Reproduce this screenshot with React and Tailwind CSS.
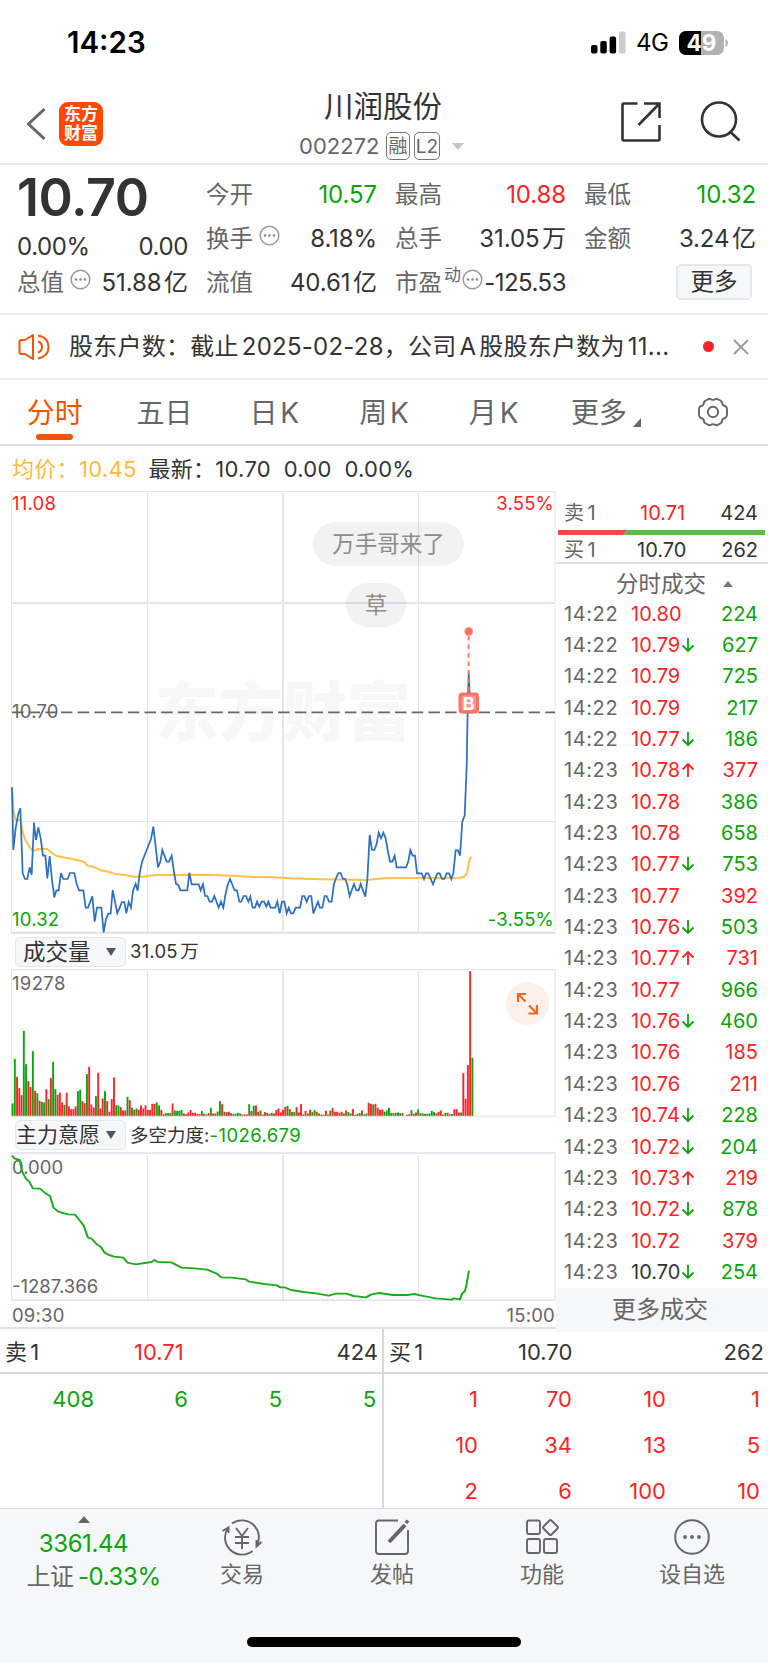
import { clsx } from 'clsx';

const RED = 'text-[#f92427]';
const GREEN = 'text-[#0ca30c]';
const DARK = 'text-[#333333]';

const TABS = ['分时', '五日', '日 K', '周 K', '月 K'];

// time, price, direction, volume, volume side
const TRADES = [
  ['14:22', '10.80', '', 224, 's'],
  ['14:22', '10.79', 'down', 627, 's'],
  ['14:22', '10.79', '', 725, 's'],
  ['14:22', '10.79', '', 217, 's'],
  ['14:22', '10.77', 'down', 186, 's'],
  ['14:23', '10.78', 'up', 377, 'b'],
  ['14:23', '10.78', '', 386, 's'],
  ['14:23', '10.78', '', 658, 's'],
  ['14:23', '10.77', 'down', 753, 's'],
  ['14:23', '10.77', '', 392, 'b'],
  ['14:23', '10.76', 'down', 503, 's'],
  ['14:23', '10.77', 'up', 731, 'b'],
  ['14:23', '10.77', '', 966, 's'],
  ['14:23', '10.76', 'down', 460, 's'],
  ['14:23', '10.76', '', 185, 'b'],
  ['14:23', '10.76', '', 211, 'b'],
  ['14:23', '10.74', 'down', 228, 's'],
  ['14:23', '10.72', 'down', 204, 's'],
  ['14:23', '10.73', 'up', 219, 'b'],
  ['14:23', '10.72', 'down', 878, 's'],
  ['14:23', '10.72', '', 379, 'b'],
  ['14:23', '10.70', 'down', 254, 's'],
];

const SELL_QUEUE = [408, 6, 5, 5];
const BUY_QUEUE = [1, 70, 10, 1, 10, 34, 13, 5, 2, 6, 100, 10];

const PRICE_LINE =
  '36,262 40,450 47,385 54,345 61,325 68,520 75,537 82,537 89,502 95,524 102,368 108,420 115,382 122,415 129,467 136,467 142,535 149,468 156,540 163,592 169,571 176,571 183,519 190,537 203,537 210,519 223,519 230,552 237,571 250,571 257,623 264,623 277,589 284,665 291,623 304,623 311,697 318,657 325,641 332,641 338,570 345,605 352,640 359,623 366,606 373,606 379,640 386,606 393,623 399,572 407,552 413,572 419,520 426,486 440,450 453,417 460,380 467,440 474,502 481,485 487,450 500,485 507,485 515,467 521,510 528,552 535,555 541,571 562,571 568,518 575,553 596,553 602,571 609,553 615,588 622,588 629,605 636,605 643,588 656,623 663,605 670,623 677,580 683,555 690,537 704,571 711,571 718,605 724,605 731,588 738,588 745,605 751,590 758,623 765,623 771,605 778,620 785,605 792,605 799,620 805,605 812,623 826,623 832,605 839,640 846,605 853,605 860,640 866,623 873,640 880,640 887,623 900,623 907,588 913,588 920,605 927,588 934,588 940,640 954,605 960,623 967,623 974,588 980,588 987,605 995,605 1002,552 1008,535 1015,519 1022,519 1029,537 1036,537 1042,555 1049,588 1062,552 1069,571 1076,571 1082,552 1089,571 1096,590 1102,540 1109,405 1116,450 1123,450 1130,432 1136,398 1143,415 1150,398 1157,415 1163,450 1170,485 1177,485 1184,467 1190,502 1218,502 1225,484 1231,450 1238,467 1245,467 1251,520 1265,520 1272,537 1278,520 1285,520 1299,553 1312,520 1319,520 1326,537 1333,537 1340,520 1347,520 1354,537 1360,519 1367,451 1374,451 1380,467 1387,365 1394,347 1400,200 1403,30 1406,-82 1410,0';

const AVG_LINE =
  '36,262 40,330 47,360 61,360 68,395 75,418 88,440 98,453 115,447 142,447 155,458 170,468 205,475 240,482 252,486 264,498 280,500 300,510 330,517 345,522 375,525 400,530 430,530 465,525 620,524 700,527 760,531 820,532 870,535 960,538 1100,540 1150,535 1240,534 1380,533 1392,530 1400,522 1404,505 1407,485 1413,470';

const FORCE_LINE =
  '34,47 40,55 55,60 62,95 72,115 82,125 92,145 112,146 125,158 140,168 150,203 163,215 190,223 210,224 222,240 234,256 246,292 258,297 270,312 282,320 292,337 305,345 320,350 345,353 357,368 380,373 425,366 433,360 442,366 480,367 508,383 545,385 580,389 605,400 620,412 650,413 688,418 698,425 740,432 775,436 785,442 797,442 815,450 850,456 885,460 920,467 940,461 970,461 990,468 1025,472 1040,463 1062,459 1100,465 1140,465 1160,462 1180,467 1220,475 1265,479 1270,475 1288,478 1294,461 1302,453 1306,435 1313,392';

// one entry per minute: side + height
const VOLUMES =
  'g37 g171 r117 r83 r62 g255 g155 r104 r86 g194 r75 g68 r45 g42 g40 r80 g50 r113 g162 g80 r63 r70 r40 g33 r69 r28 r20 r20 r28 g74 g78 r44 r38 g125 r147 r34 r25 g59 r129 r22 r52 g74 r44 r12 r50 r115 g32 g31 r26 r16 r16 g57 r47 g24 r18 g22 r18 r31 r22 r31 r18 r18 r36 r36 g40 g31 r18 r5 g8 g8 g8 r37 g16 g15 g15 g18 r7 r5 r10 r17 r9 r9 r6 r5 g14 r6 g4 r8 g24 r7 r7 g13 g44 r35 g12 r11 r12 r8 g6 g6 g9 g7 r4 r4 r4 g35 r15 g30 r31 r12 g16 r4 r11 g9 r6 g9 r7 r17 r22 r10 r18 r27 g30 r20 g11 g12 r26 r10 r35 r4 r15 g7 r18 g11 g17 r12 g7 r4 g3 r15 r4 g16 r23 r12 r12 r9 r12 g7 r16 g11 g7 r20 g3 r6 g8 r16 g4 g7 r39 r36 g34 r36 r24 r18 r19 g12 g16 g24 g9 r8 g9 g10 g8 r8 r0 r3 r5 g17 r6 r10 g19 g8 r7 g6 g6 g7 g15 g11 r7 r12 r16 g4 g9 r9 g5 g5 r20 r20 r10 g10 r128 r51 r152 r434 g174'.split(' ');

function StatusBar() {
  return (
    <div className="flex h-[85px] items-center justify-between pl-[67px] pr-[39px]">
      <span className="text-[29.5px] font-semibold leading-none text-black">14:23</span>
      <div className="flex items-center">
        <svg width="35" height="23" viewBox="0 0 35 23">
          <rect x="0" y="14" width="6.5" height="8.5" rx="2" />
          <rect x="9.3" y="10" width="6.5" height="12.5" rx="2" />
          <rect x="18.6" y="5.5" width="6.5" height="17" rx="2" />
          <rect x="28" y="0.5" width="6.5" height="22" rx="2" fill="#cccccc" />
        </svg>
        <span className="ml-2.5 w-[33px] text-2xl leading-none tracking-[-0.5px] text-black">4G</span>
        <svg className="ml-2.5" width="50" height="26" viewBox="0 0 50 26">
          <rect x="0" y="1" width="45" height="24" rx="7" fill="#b2b2b2" />
          <path d="M7 1H22V25H7A7 7 0 0 1 0 18V8A7 7 0 0 1 7 1Z" />
          <path d="M46.5 9Q49 10 49 13T46.5 17Z" fill="#b2b2b2" />
          <text x="22.5" y="21" textAnchor="middle" fontSize="22.5" fontWeight="700" fill="#fff">49</text>
        </svg>
      </div>
    </div>
  );
}

function Header() {
  return (
    <header className="flex h-20 border-b-2 border-[#ececee] pl-[26px] pr-[26px]">
      <div className="flex w-[273px] items-center pb-3 pt-[11px]">
        <svg width="20" height="34" viewBox="0 0 20 34" fill="none" stroke="#666" strokeWidth="3">
          <path d="M18.5 2L2.5 17L18.5 32" />
        </svg>
        <div className="ml-[13px] flex h-11 w-11 flex-col items-center justify-center rounded-[9px] bg-[#ff4800] text-[17px] font-bold leading-[19px] text-white">
          <span>东方</span>
          <span>财富</span>
        </div>
      </div>
      <div className="flex flex-1 flex-col pt-[3px]">
        <h1 className="pl-[25px] text-[29.5px] leading-[37px] text-[#333333]">川润股份</h1>
        <div className="mt-[7px] flex h-7 items-center text-[#666666]">
          <span className="w-[87px] text-[22px]">002272</span>
          <span className="flex h-7 w-6 items-center justify-center rounded-[5px] border border-[#777777] text-[19px] leading-none">融</span>
          <span className="ml-1 flex h-7 w-[26px] items-center justify-center rounded-[5px] border border-[#777777] text-[19px] leading-none">L2</span>
          <span className="ml-3 h-0 w-0 border-x-[6px] border-t-[7px] border-x-transparent border-t-[#c4c4c4]" />
        </div>
      </div>
      <svg className="mt-4 mr-[38px]" width="42" height="42" viewBox="0 0 42 42" fill="none" stroke="#333" strokeWidth="2.6">
        <path d="M17.5 2.5H4Q2.5 2.5 2.5 4V38Q2.5 39.5 4 39.5H38Q39.5 39.5 39.5 38V24" />
        <path d="M24 2.5H39.5V17M39 3L18.5 24" />
      </svg>
      <svg className="mt-4" width="42" height="42" viewBox="0 0 42 42" fill="none" stroke="#333" strokeWidth="2.6">
        <circle cx="19" cy="18.5" r="17" />
        <path d="M30.5 31L39.5 39.5" />
      </svg>
    </header>
  );
}

function Dots() {
  return (
    <svg className="-mt-2 shrink-0" width="21" height="21" viewBox="0 0 21 21">
      <circle cx="10.5" cy="10.5" r="9.3" fill="none" stroke="#999" strokeWidth="1.5" />
      <circle cx="6" cy="10.5" r="1.3" fill="#888" />
      <circle cx="10.5" cy="10.5" r="1.3" fill="#888" />
      <circle cx="15" cy="10.5" r="1.3" fill="#888" />
    </svg>
  );
}

function Stat({ label, value, color = DARK, sup, dots }) {
  return (
    <div className="flex h-11 items-center justify-between whitespace-nowrap">
      <span className="flex items-center text-[23.5px] text-[#666666]">
        {label}
        {sup && <sup className="-top-2 ml-0.5 text-[17px] leading-none">{sup}</sup>}
        {dots && <span className={clsx('flex', sup ? 'ml-px' : 'ml-1.5')}><Dots /></span>}
      </span>
      <span className={clsx('text-[24px] [word-spacing:-4px]', sup ? 'tracking-[-0.5px]' : 'tracking-[-0.1px]', color)}>{value}</span>
    </div>
  );
}

function Quote() {
  return (
    <section className="flex h-[150px] gap-[18px] border-b-2 border-[#ececee] pl-[17px] pr-[12px] pt-2">
      <div className="w-[171px]">
        <div className="h-[52px] text-[52px] font-semibold leading-[49px] tracking-[-0.4px] text-[#333333]">10.70</div>
        <div className="flex h-9 items-center justify-between pt-[7px] text-[24px] tracking-[-0.4px] text-[#333333]">
          <span>0.00%</span>
          <span>0.00</span>
        </div>
        <Stat label="总值" value="51.88 亿" dots />
      </div>
      <div className="w-[171px]">
        <Stat label="今开" value="10.57" color={GREEN} />
        <Stat label="换手" value="8.18%" dots />
        <Stat label="流值" value="40.61 亿" />
      </div>
      <div className="w-[171px]">
        <Stat label="最高" value="10.88" color={RED} />
        <Stat label="总手" value="31.05 万" />
        <Stat label="市盈" sup="动" value="-125.53" dots />
      </div>
      <div className="w-[172px]">
        <Stat label="最低" value="10.32" color={GREEN} />
        <Stat label="金额" value="3.24 亿" />
        <button className="ml-auto mr-1 mt-[3px] flex h-9 w-[76px] items-center justify-center rounded-[5px] border-2 border-[#e4e7ec] bg-[#f6f7f9] text-[23.5px] text-[#333333]">更多</button>
      </div>
    </section>
  );
}

function Notice() {
  return (
    <div className="flex h-[65px] items-center border-b-2 border-[#ececee] pl-[18px]">
      <svg width="32" height="28" viewBox="0 0 32 28" fill="none" stroke="#f0560a" strokeWidth="2">
        <path d="M15 2L7 7H3.5Q1.5 7 1.5 9V19Q1.5 21 3.5 21H7L15 26Z" strokeLinejoin="round" />
        <path d="M20 8.5Q24 10 24 14T20 19.5M20 2.5Q30.5 4.5 30.5 14T20 25.5" />
      </svg>
      <p className="ml-[19px] w-[634px] whitespace-nowrap text-[24px] tracking-[0.25px] text-[#333333] [word-spacing:-4px]">股东户数：截止 2025-02-28，公司 A 股股东户数为 11...</p>
      <span className="h-[11px] w-[11px] rounded-full bg-[#f92427]" />
      <svg className="ml-[19px]" width="16" height="16" viewBox="0 0 16 16" stroke="#999" strokeWidth="1.8">
        <path d="M1 1L15 15M15 1L1 15" />
      </svg>
    </div>
  );
}

function Tabs() {
  return (
    <nav className="grid h-[66px] grid-cols-7 border-b-2 border-[#dfe1e8] text-[28px] text-[#666666]">
      {TABS.map((tab, i) => (
        <div key={tab} className={clsx('relative flex items-center justify-center whitespace-nowrap pt-px [word-spacing:-5px]', i === 0 && 'text-[#ee5500]')}>
          {tab}
          {i === 0 && <span className="absolute bottom-1 h-[6px] w-[37px] rounded-[3px] bg-[#ee5500]" />}
        </div>
      ))}
      <div className="flex items-center justify-center whitespace-nowrap pl-[5px] pt-px">
        更多
        <span className="ml-1.5 mt-[20px] h-0 w-0 border-b-[9px] border-l-[8px] border-b-[#666666] border-l-transparent" />
      </div>
      <div className="flex items-center justify-center">
        <svg width="32" height="30" viewBox="0 0 32 30" fill="none" stroke="#666" strokeWidth="1.9">
          <path d="M10.5 2.5Q12.5 1 14 2.2Q16 3.6 18 2.2Q19.5 1 21.5 2.5L24 4Q25 5 25.3 6.5Q25.5 8.5 28 9Q30 9.800 30 12V18Q30 20.2 28 21Q25.5 21.5 25.3 23.5Q25 25 24 26L21.5 27.5Q19.5 29 18 27.8Q16 26.4 14 27.8Q12.5 29 10.5 27.5L8 26Q7 25 6.7 23.5Q6.5 21.5 4 21Q2 20.2 2 18V12Q2 9.8 4 9Q6.5 8.5 6.7 6.5Q7 5 8 4Z" strokeLinejoin="round" />
          <circle cx="16" cy="15" r="5.2" />
        </svg>
      </div>
    </nav>
  );
}

function Bubble({ x, y, width, children }) {
  return (
    <g>
      <rect x={x} y={y} width={width} height="44" rx="22" fill="#000" fillOpacity="0.05" />
      <text x={x + width / 2} y={y + 30} textAnchor="middle" fontSize="22.5" fill="#8c8c8c">{children}</text>
    </g>
  );
}

function PriceChart() {
  return (
    <svg className="block" width="545" height="443" viewBox="11 491 545 443">
      <text x="283" y="735" textAnchor="middle" fontSize="64" fontWeight="900" fill="#f7f7f8">东方财富</text>
      <g stroke="#e4e5ef" fill="none">
        <path d="M11 491.5H556M11.5 491V934M555 491V934" stroke="#e6e8eb" />
        <path d="M11 603H555M283 493V931" strokeWidth="2" />
        <path d="M11 821.5H555M147.5 493V931M418.5 493V931" strokeWidth="1.2" />
        <path d="M11 932.8H555" stroke="#dfe1e8" strokeWidth="2" />
      </g>
      <path d="M61 712.3H555M12 712.3H58" stroke="#666" strokeWidth="1.7" strokeDasharray="11.5 5.2" />
      <g transform="translate(0 700) scale(0.33333)" fill="none">
        <polyline points={AVG_LINE} stroke="#ffc04d" strokeWidth="6" />
        <polyline points={PRICE_LINE} stroke="#2d70bd" strokeWidth="5.2" />
      </g>
      <path d="M468.7 636V692" stroke="#ff7364" strokeWidth="1.8" strokeDasharray="4.5 4" />
      <circle cx="468.7" cy="631.5" r="4.2" fill="#ff7364" />
      <rect x="458.5" y="692.5" width="20.5" height="21" rx="4" fill="#ff7364" />
      <rect x="461.5" y="695.5" width="14.5" height="15" rx="2" fill="#ff9488" />
      <text x="468.7" y="709.5" textAnchor="middle" fontSize="18" fontWeight="700" fill="#fff">B</text>
      <Bubble x={313} y={522} width={151}>万手哥来了</Bubble>
      <Bubble x={346} y={583} width={60}>草</Bubble>
      <g fontSize="18.5" letterSpacing="0.2">
        <text x="12" y="510" fill="#f92427">11.08</text>
        <text x="554" y="510" textAnchor="end" fill="#f92427">3.55%</text>
        <text x="12" y="718" fill="#666">10.70</text>
        <text x="12" y="926" fill="#0ca30c">10.32</text>
        <text x="554" y="926" textAnchor="end" fill="#0ca30c">-3.55%</text>
      </g>
    </svg>
  );
}

function VolumeChart() {
  return (
    <svg className="block" width="545" height="148" viewBox="11 969 545 148">
      <g stroke="#e4e5ef" fill="none">
        <path d="M11 969.5H555M11 1116.3H555M11.5 969V1117M555 969V1117" stroke="#e3e6ea" strokeWidth="1.3" />
        <path d="M283 971V1116" strokeWidth="2" />
        <path d="M147.5 971V1116M418.5 971V1116" strokeWidth="1.2" />
      </g>
      {VOLUMES.map((bar, i) => {
        const h = Number(bar.slice(1)) / 3;
        return <rect key={i} x={11.6 + i * 2.254} y={1115.8 - h} width="1.9" height={h} fill={bar[0] === 'g' ? '#0ca30c' : '#f92427'} />;
      })}
      <text x="12" y="990" fontSize="18.5" letterSpacing="0.35" fill="#666">19278</text>
      <circle cx="527.5" cy="1003.5" r="21.5" fill="#fdf0ea" />
      <path d="M518 1002V994H526M518 994L525.5 1001.5M537 1005V1013.5H528.5M537 1013.5L529 1005.5" fill="none" stroke="#f0661a" strokeWidth="2.2" />
    </svg>
  );
}

function ForceChart() {
  return (
    <svg className="block" width="545" height="149" viewBox="11 1152 545 149">
      <g stroke="#e4e5ef" fill="none">
        <path d="M11 1153H555M11 1300.3H555" stroke="#dfe1e8" strokeWidth="1.7" />
        <path d="M11.5 1152V1301M555 1152V1301M147.5 1155V1300M418.5 1155V1300" strokeWidth="1.2" />
        <path d="M283 1155V1300" strokeWidth="2" />
      </g>
      <text x="12" y="1173.5" fontSize="18.5" fill="#666">0.000</text>
      <text x="12" y="1292.5" fontSize="18.5" fill="#666">-1287.366</text>
      <g transform="translate(0 1140) scale(0.35714 0.33333)">
        <polyline points={FORCE_LINE} fill="none" stroke="#1cab1c" strokeWidth="5.6" strokeLinejoin="round" />
      </g>
    </svg>
  );
}

function Picker({ children }) {
  return (
    <span className="flex h-[30px] w-[111px] items-center justify-between whitespace-nowrap rounded-[5px] border-[1.5px] border-[#e4e7ec] bg-[#f6f7f9] pr-[9px] text-[#333333]">
      {children}
      <span className="h-0 w-0 border-x-[5px] border-t-[8px] border-x-transparent border-t-[#555555]" />
    </span>
  );
}

function Charts() {
  return (
    <div className="w-[556px]">
      <div className="pl-[11px]">
        <PriceChart />
        <div className="flex h-[35px] items-center pl-1">
          <Picker><span className="pl-[7px] text-[22.5px]">成交量</span></Picker>
          <span className="ml-1 text-[18.5px] tracking-[0.2px] text-[#333333] [word-spacing:-3px]">31.05 万</span>
        </div>
        <VolumeChart />
        <div className="flex h-[35px] items-center pl-1">
          <Picker><span className="text-[21px]">主力意愿</span></Picker>
          <span className="ml-1 mt-0.5 text-[18.5px] text-[#333333]">多空力度: <span className={clsx('-ml-[5px] tracking-[0.4px]', GREEN)}>-1026.679</span></span>
        </div>
        <ForceChart />
      </div>
      <div className="flex h-[28px] items-center justify-between border-b-2 border-[#dfe1e8] pl-3 pr-px pt-1 text-[18.5px] tracking-[0.2px] text-[#666666]">
        <span>09:30</span>
        <span>15:00</span>
      </div>
    </div>
  );
}

function Arrow({ dir }) {
  return (
    <svg className="-ml-[2px]" width="14" height="16" viewBox="0 0 14 16" fill="none" strokeWidth="1.8" stroke={dir === 'up' ? '#f92427' : '#0ca30c'}>
      <path d={dir === 'up' ? 'M7 15V2M1.5 7.5L7 2L12.5 7.5' : 'M7 1V14M1.5 8.5L7 14L12.5 8.5'} />
    </svg>
  );
}

function Trades() {
  return (
    <div className="flex flex-1 flex-col text-[20px]">
      <div className="flex h-[39px] items-center pl-2 pr-[10px] pt-1">
        <span className="w-[76px] text-[#666666] [word-spacing:-2px]">卖 1</span>
        <span className={clsx('flex-1', RED)}>10.71</span>
        <span className={DARK}>424</span>
      </div>
      <svg className="ml-0.5 block" width="207" height="5" viewBox="0 0 207 5">
        <path d="M0 0H70L65 5H0Z" fill="#ee4a4a" />
        <path d="M70 0H207V5H65Z" fill="#5bbb46" />
      </svg>
      <div className="flex h-[29px] items-center border-b-2 border-[#dfe1e8] pl-2 pr-[10px] pt-[3px]">
        <span className="w-[73px] text-[#666666] [word-spacing:-2px]">买 1</span>
        <span className={clsx('flex-1', DARK)}>10.70</span>
        <span className={DARK}>262</span>
      </div>
      <div className="flex h-[34px] items-center pl-[60px] pt-1.5 text-[22.5px] text-[#666666]">
        分时成交
        <span className="ml-[17px] h-0 w-0 border-x-[5px] border-b-[6px] border-x-transparent border-b-[#777777]" />
      </div>
      <div>
        {TRADES.map(([time, price, dir, volume, side], i) => (
          <div key={i} className="flex h-[31.35px] items-center pl-2 pr-[10px]">
            <span className="w-[67px] tracking-[0.6px] text-[#666666]">{time}</span>
            <span className={clsx('w-[52px]', i === TRADES.length - 1 ? DARK : RED)}>{price}</span>
            {dir && <Arrow dir={dir} />}
            <span className={clsx('ml-auto', side === 's' ? GREEN : RED)}>{volume}</span>
          </div>
        ))}
      </div>
      <div className="flex h-[44px] items-center justify-center bg-[#f6f7f9] pr-1 text-[24px] text-[#666666]">更多成交</div>
    </div>
  );
}

function Level({ label, price, priceColor, volume }) {
  return (
    <div className="flex h-[45px] items-center border-b-2 border-[#d6d9e0] pl-[5px] pr-1 pt-[5px] text-[22px] text-[#333333]">
      <span className="w-[129px] [word-spacing:-3px]">{label}</span>
      <span className={clsx('flex-1', priceColor)}>{price}</span>
      <span>{volume}</span>
    </div>
  );
}

function Queues() {
  return (
    <section className="-mt-[3px] flex h-[179px]">
      <div className="w-[384px] border-r-2 border-[#d6d9e0]">
        <Level label="卖 1" price="10.71" priceColor={RED} volume={424} />
        <div className={clsx('grid grid-cols-4 pr-[6px] pt-[2px] text-right text-[22px] leading-[46px]', GREEN)}>
          {SELL_QUEUE.map((n, i) => <span key={i}>{n}</span>)}
        </div>
      </div>
      <div className="w-[384px]">
        <Level label="买 1" price="10.70" volume={262} />
        <div className={clsx('grid grid-cols-4 pr-[8px] pt-[2px] text-right text-[22px] leading-[46px]', RED)}>
          {BUY_QUEUE.map((n, i) => <span key={i}>{n}</span>)}
        </div>
      </div>
    </section>
  );
}

function NavItem({ label, children }) {
  return (
    <div className="flex w-[150px] flex-col items-center pt-[9px] text-[22px] text-[#666666]">
      <svg width="42" height="38" viewBox="0 0 42 38" fill="none" stroke="#666" strokeWidth="1.9">{children}</svg>
      <span className="mt-px leading-[34px]">{label}</span>
    </div>
  );
}

function BottomBar() {
  return (
    <footer className="flex h-[155px] flex-col justify-between border-t border-[#d6d9e0] bg-[#f6f7f9]">
      <div className="flex">
        <div className="flex w-[167px] flex-col items-center pt-[7px] text-[24px] leading-[33px]">
          <span className="h-0 w-0 border-x-[6px] border-b-[7px] border-x-transparent border-b-[#666666]" />
          <span className={clsx('mt-1 tracking-[-0.4px]', GREEN)}>3361.44</span>
          <span className="whitespace-nowrap pl-5 tracking-[-0.4px] text-[#666666] [word-spacing:-2px]">上证 <span className={GREEN}>-0.33%</span></span>
        </div>
        <NavItem label="交易">
          <path d="M11 5.5A17 17 0 0 1 35.5 28M31.5 33A17 17 0 0 1 7 10M1.5 13L7.5 9.5V15M40.5 24L35.5 28.5V22" />
          <path d="M15 10L21 18L27 10M14 19H28M14 25H28M21 18V31" />
        </NavItem>
        <NavItem label="发帖">
          <path d="M27 2.5H8Q5 2.5 5 5.5V33Q5 36 8 36H34Q37 36 37 33V12" />
          <path d="M34 7L18 24" strokeWidth="4" />
          <path d="M37 2.5L35 5" strokeWidth="3.5" />
        </NavItem>
        <NavItem label="功能">
          <rect x="6" y="2.5" width="13" height="13.5" rx="2" />
          <rect x="6" y="21" width="13" height="14" rx="2" />
          <rect x="23" y="21" width="13" height="14" rx="2" />
          <path d="M28.5 2.5Q29.5 1.5 30.5 2.5L36.5 8.5Q37.5 9.5 36.5 10.5L30.5 16.5Q29.5 17.5 28.5 16.5L22.5 10.5Q21.5 9.5 22.5 8.5Z" />
        </NavItem>
        <NavItem label="设自选">
          <circle cx="21" cy="19" r="16.8" />
          <g fill="#666" stroke="none">
            <circle cx="14" cy="19" r="1.9" />
            <circle cx="21" cy="19" r="1.9" />
            <circle cx="28" cy="19" r="1.9" />
          </g>
        </NavItem>
      </div>
      <div className="mx-auto mb-4 h-[10px] w-[274px] rounded-full bg-black" />
    </footer>
  );
}

export default function App() {
  return (
    <div className="h-[1663px] w-[768px] overflow-hidden bg-white font-['Inter','Noto_Sans_CJK_SC',sans-serif]">
      <StatusBar />
      <Header />
      <Quote />
      <Notice />
      <Tabs />
      <div className="flex h-[45px] items-center gap-3 whitespace-pre pl-3 pt-0.5 text-[22px] text-[#333333]">
        <span className="tracking-[0.3px] text-[#fdba3d]">均价：10.45</span>
        <span className="tracking-[0.25px]">最新：10.70  0.00  0.00%</span>
      </div>
      <div className="flex">
        <Charts />
        <Trades />
      </div>
      <Queues />
      <BottomBar />
    </div>
  );
}
